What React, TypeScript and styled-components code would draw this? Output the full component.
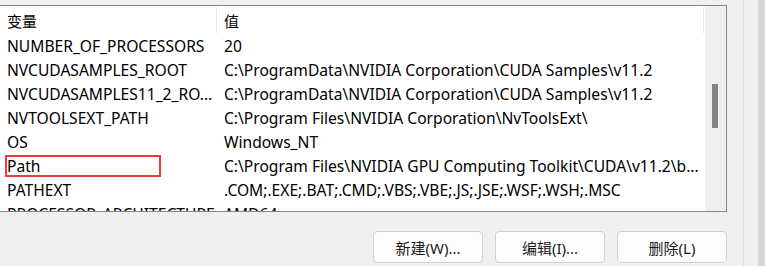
import React from "react";
import styled, { createGlobalStyle } from "styled-components";

const GlobalStyle = createGlobalStyle`
  html, body { margin: 0; padding: 0; background: #f0f0f0; overflow: hidden; }
  body { font-family: "Noto Sans", "Noto Sans CJK SC", sans-serif; }
`;

const Dialog = styled.div`
  width: 765px;
  height: 266px;
  display: flex;
  background: #f0f0f0;
  overflow: hidden;
`;

const Main = styled.div`
  width: 727px;
  display: flex;
  flex-direction: column;
  padding-top: 5px;
  box-sizing: border-box;
`;

const ListBox = styled.div`
  height: 207px;
  box-sizing: border-box;
  border: 1px solid #858590;
  border-left: none;
  background: #fff;
  display: flex;
`;

const Table = styled.div`
  flex: 1;
  min-width: 0;
  display: flex;
  flex-direction: column;
  overflow: hidden;
`;

const HeaderRow = styled.div`
  height: 28px;
  flex: none;
  display: flex;
  align-items: center;
  padding-right: 1px;
`;

const HeaderCell = styled.div<{ $w?: number }>`
  ${(p) => (p.$w ? `width: ${p.$w}px; flex: none;` : "flex: 1;")}
  box-sizing: border-box;
  padding-left: 7px;
  font-size: 15px;
  color: #000;
  white-space: nowrap;
`;

const HeaderDivider = styled.div`
  width: 1px;
  height: 26px;
  background: #e5e5e5;
  flex: none;
`;

const Row = styled.div`
  position: relative;
  height: 24px;
  flex: none;
  display: flex;
  align-items: center;
`;

const Cell = styled.div<{ $w?: number }>`
  ${(p) => (p.$w ? `width: ${p.$w}px; flex: none;` : "flex: 1; min-width: 0;")}
  box-sizing: border-box;
  padding-left: 7px;
  padding-right: 2px;
  font-size: 15.6px;
  line-height: 23px;
  color: #000;
  white-space: nowrap;
  overflow: hidden;
`;

const Highlight = styled.span`
  position: absolute;
  left: 5px;
  top: 1px;
  width: 156px;
  height: 22px;
  box-sizing: border-box;
  border: 2px solid #ef3b3b;
  pointer-events: none;
`;

const Scrollbar = styled.div`
  width: 21px;
  flex: none;
  background: #f0f0f0;
  display: flex;
  flex-direction: column;
`;

const Thumb = styled.div<{ $top: number }>`
  margin-top: ${(p) => p.$top}px;
  margin-left: 7px;
  width: 6px;
  height: 44px;
  background: #858585;
`;

const ButtonBar = styled.div`
  display: flex;
  justify-content: flex-end;
  gap: 12px;
  margin-top: 19px;
`;

const Button = styled.button`
  width: 110px;
  height: 32px;
  box-sizing: border-box;
  border: 1px solid #d0d0d0;
  border-radius: 4px;
  background: #fdfdfd;
  font-family: "Noto Sans", "Noto Sans CJK SC", sans-serif;
  font-size: 15px;
  color: #1a1a1a;
  padding: 0;
`;

const RightFrame = styled.div`
  flex: 1;
  display: flex;
`;

const FrameGap = styled.div<{ $w: number }>`
  width: ${(p) => p.$w}px;
  flex: none;
`;

const FrameLine = styled.div`
  width: 1px;
  flex: none;
  background: #dcdcdc;
`;

const FrameBand = styled.div`
  flex: 1;
  background: #d6d6d6;
`;

const rows: { name: string; value: string; marked?: boolean }[] = [
  { name: "NUMBER_OF_PROCESSORS", value: "20" },
  { name: "NVCUDASAMPLES_ROOT", value: "C:\\ProgramData\\NVIDIA Corporation\\CUDA Samples\\v11.2" },
  { name: "NVCUDASAMPLES11_2_RO...", value: "C:\\ProgramData\\NVIDIA Corporation\\CUDA Samples\\v11.2" },
  { name: "NVTOOLSEXT_PATH", value: "C:\\Program Files\\NVIDIA Corporation\\NvToolsExt\\" },
  { name: "OS", value: "Windows_NT" },
  { name: "Path", value: "C:\\Program Files\\NVIDIA GPU Computing Toolkit\\CUDA\\v11.2\\b...", marked: true },
  { name: "PATHEXT", value: ".COM;.EXE;.BAT;.CMD;.VBS;.VBE;.JS;.JSE;.WSF;.WSH;.MSC" },
  { name: "PROCESSOR_ARCHITECTURE", value: "AMD64" },
];

export default function App() {
  return (
    <>
      <GlobalStyle />
      <Dialog>
        <Main>
          <ListBox>
            <Table>
              <HeaderRow>
                <HeaderCell $w={216}>变量</HeaderCell>
                <HeaderDivider />
                <HeaderCell>值</HeaderCell>
                <HeaderDivider />
              </HeaderRow>
              {rows.map((r) => (
                <Row key={r.name}>
                  <Cell $w={217}>{r.name}</Cell>
                  <Cell>{r.value}</Cell>
                  {r.marked && <Highlight />}
                </Row>
              ))}
            </Table>
            <Scrollbar>
              <Thumb $top={78} />
            </Scrollbar>
          </ListBox>
          <ButtonBar>
            <Button>新建(W)...</Button>
            <Button>编辑(I)...</Button>
            <Button>删除(L)</Button>
          </ButtonBar>
        </Main>
        <RightFrame>
          <FrameGap $w={16} />
          <FrameLine />
          <FrameGap $w={14} />
          <FrameBand />
        </RightFrame>
      </Dialog>
    </>
  );
}
